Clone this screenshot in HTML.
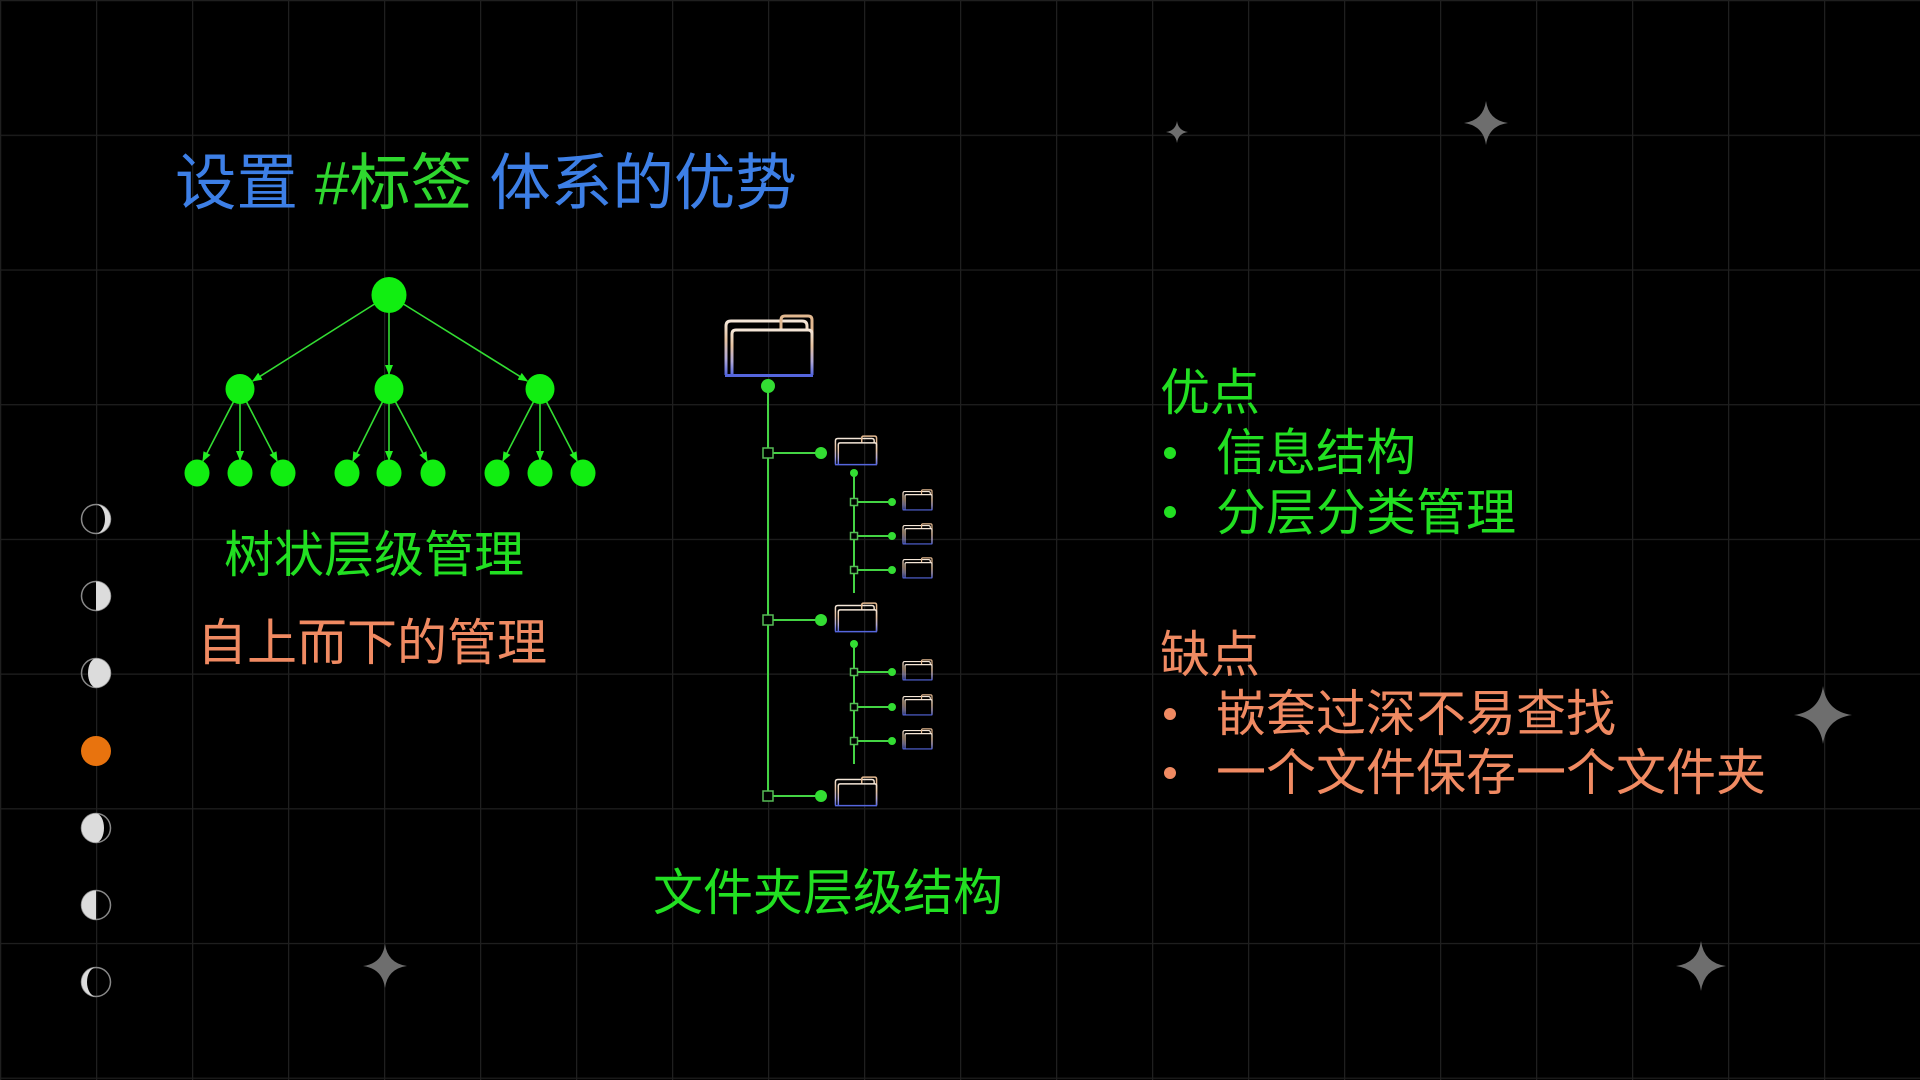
<!DOCTYPE html>
<html><head><meta charset="utf-8"><style>
html,body{margin:0;padding:0;background:#000;width:1920px;height:1080px;overflow:hidden}
svg{display:block}
text{font-family:"Liberation Sans","Noto Sans CJK SC",sans-serif;dominant-baseline:central}
</style></head><body>
<svg width="1920" height="1080" viewBox="0 0 1920 1080" xmlns="http://www.w3.org/2000/svg">
<defs>
<pattern id="grid" x="0" y="0" width="96" height="134.7" patternUnits="userSpaceOnUse">
<path d="M0,0 V134.7 M0,0 H96" stroke="#1f1f1f" stroke-width="2.5" fill="none"/>
</pattern>
<marker id="ar" markerWidth="10" markerHeight="10" refX="9" refY="5" orient="auto" markerUnits="userSpaceOnUse">
<path d="M0,1 L10,5 L0,9 Z" fill="#22ee22"/>
</marker>
<linearGradient id="fg" x1="0" y1="0" x2="0" y2="1">
<stop offset="0" stop-color="#f4e6d8"/><stop offset="0.35" stop-color="#e6c2a0"/><stop offset="0.7" stop-color="#b0a8d8"/><stop offset="1" stop-color="#5566dd"/>
</linearGradient>
<symbol id="folder" viewBox="0 0 92 64">
<path d="M3,61 V12 Q3,7 8,7 H79 Q84,7 84,12 V16" fill="none" stroke="url(#fg)" vector-effect="non-scaling-stroke"/>
<path d="M58,15 V6 Q58,2 62,2 H85 Q89,2 89,6 V61" fill="none" stroke="#e2b890" vector-effect="non-scaling-stroke"/>
<path d="M9,61 V20 Q9,16 13,16 H85 Q89,16 89,20 V61" fill="none" stroke="url(#fg)" vector-effect="non-scaling-stroke"/>
<path d="M2,61.5 H90" stroke="#5566dd" vector-effect="non-scaling-stroke"/>
</symbol>
<symbol id="star" viewBox="-1 -1 2 2">
<path d="M0,-1 Q0.12,-0.12 1,0 Q0.12,0.12 0,1 Q-0.12,0.12 -1,0 Q-0.12,-0.12 0,-1 Z" fill="#6e6e6e"/>
</symbol>
</defs>
<rect width="1920" height="1080" fill="#000"/>
<rect width="1920" height="1080" fill="url(#grid)"/>

<use href="#star" x="1166" y="121" width="22" height="22"/>
<use href="#star" x="1463" y="101" width="46" height="44"/>
<use href="#star" x="1793" y="686" width="60" height="58"/>
<use href="#star" x="362" y="944" width="46" height="44"/>
<use href="#star" x="1675" y="941" width="52" height="50"/>

<text x="175" y="183" font-size="61.5"><tspan fill="#3d7fe6">设置 </tspan><tspan fill="#2fd72f">#标签 </tspan><tspan fill="#3d7fe6">体系的优势</tspan></text>

<g stroke="#33dd33" stroke-width="1.6" fill="none" marker-end="url(#ar)">
<line x1="374.6" y1="304" x2="252.7" y2="381"/>
<line x1="389" y1="312" x2="389" y2="374"/>
<line x1="403.4" y1="304" x2="527.3" y2="381"/>
<line x1="233.4" y1="402" x2="202.9" y2="461"/>
<line x1="240" y1="403.5" x2="240" y2="460"/>
<line x1="246.6" y1="402" x2="277.1" y2="461"/>
<line x1="382.4" y1="402" x2="352.9" y2="461"/>
<line x1="389" y1="403.5" x2="389" y2="460"/>
<line x1="395.6" y1="402" x2="427.1" y2="461"/>
<line x1="533.4" y1="402" x2="502.9" y2="461"/>
<line x1="540" y1="403.5" x2="540" y2="460"/>
<line x1="546.6" y1="402" x2="577.1" y2="461"/>
</g>
<g fill="#11ee11">
<ellipse cx="389" cy="295" rx="17.5" ry="18"/>
<ellipse cx="240" cy="389" rx="14.5" ry="15"/>
<ellipse cx="389" cy="389" rx="14.5" ry="15"/>
<ellipse cx="540" cy="389" rx="14.5" ry="15"/>
<ellipse cx="197" cy="473" rx="12.5" ry="13.5"/>
<ellipse cx="240" cy="473" rx="12.5" ry="13.5"/>
<ellipse cx="283" cy="473" rx="12.5" ry="13.5"/>
<ellipse cx="347" cy="473" rx="12.5" ry="13.5"/>
<ellipse cx="389" cy="473" rx="12.5" ry="13.5"/>
<ellipse cx="433" cy="473" rx="12.5" ry="13.5"/>
<ellipse cx="497" cy="473" rx="12.5" ry="13.5"/>
<ellipse cx="540" cy="473" rx="12.5" ry="13.5"/>
<ellipse cx="583" cy="473" rx="12.5" ry="13.5"/>
</g>
<text x="374" y="555" font-size="50" fill="#22e022" text-anchor="middle">树状层级管理</text>
<text x="372" y="643" font-size="50" fill="#f08a62" text-anchor="middle">自上而下的管理</text>

<g stroke="#888" stroke-width="1.5" fill="none">
<circle cx="96" cy="519" r="14.5"/><circle cx="96" cy="596" r="14.5"/><circle cx="96" cy="673" r="14.5"/>
<circle cx="96" cy="828" r="14.5"/><circle cx="96" cy="905" r="14.5"/><circle cx="96" cy="982" r="14.5"/>
</g>
<g fill="#dcdcdc">
<path d="M96,504.5 A14.5,14.5 0 0 1 96,533.5 A9,14.5 0 0 0 96,504.5 Z"/>
<path d="M96,581.5 A14.5,14.5 0 0 1 96,610.5 Z"/>
<path d="M96,658.5 A14.5,14.5 0 0 1 96,687.5 A8,14.5 0 0 1 96,658.5 Z"/>
<path d="M96,813.5 A14.5,14.5 0 0 0 96,842.5 A8,14.5 0 0 0 96,813.5 Z"/>
<path d="M96,890.5 A14.5,14.5 0 0 0 96,919.5 Z"/>
<path d="M96,967.5 A14.5,14.5 0 0 0 96,996.5 A9,14.5 0 0 1 96,967.5 Z"/>
</g>
<circle cx="96" cy="751" r="15" fill="#e8730e"/>

<use href="#folder" x="723" y="314" width="92" height="64" stroke-width="3"/>
<g stroke="#44d444" stroke-width="2" fill="none">
<line x1="768" y1="386" x2="768" y2="796"/>
<line x1="768" y1="453" x2="821" y2="453"/>
<line x1="768" y1="620" x2="821" y2="620"/>
<line x1="768" y1="796" x2="821" y2="796"/>
<line x1="854" y1="473" x2="854" y2="593"/>
<line x1="854" y1="644" x2="854" y2="764"/>
<line x1="854" y1="502" x2="892" y2="502"/>
<line x1="854" y1="536" x2="892" y2="536"/>
<line x1="854" y1="570" x2="892" y2="570"/>
<line x1="854" y1="672" x2="892" y2="672"/>
<line x1="854" y1="707" x2="892" y2="707"/>
<line x1="854" y1="741" x2="892" y2="741"/>
</g>
<g fill="#000" stroke="#55bb55" stroke-width="1.5">
<rect x="763" y="448" width="10" height="10"/><rect x="763" y="615" width="10" height="10"/><rect x="763" y="791" width="10" height="10"/>
<rect x="850.5" y="498.5" width="7" height="7"/><rect x="850.5" y="532.5" width="7" height="7"/><rect x="850.5" y="566.5" width="7" height="7"/>
<rect x="850.5" y="668.5" width="7" height="7"/><rect x="850.5" y="703.5" width="7" height="7"/><rect x="850.5" y="737.5" width="7" height="7"/>
</g>
<g fill="#33dd33">
<circle cx="768" cy="386" r="7"/>
<circle cx="821" cy="453" r="6"/><circle cx="821" cy="620" r="6"/><circle cx="821" cy="796" r="6"/>
<circle cx="854" cy="473" r="4"/><circle cx="854" cy="644" r="4"/>
<circle cx="892" cy="502" r="4"/><circle cx="892" cy="536" r="4"/><circle cx="892" cy="570" r="4"/>
<circle cx="892" cy="672" r="4"/><circle cx="892" cy="707" r="4"/><circle cx="892" cy="741" r="4"/>
</g>
<g stroke-width="1.5">
<use href="#folder" x="834" y="435" width="44" height="31"/>
<use href="#folder" x="834" y="602" width="44" height="31"/>
<use href="#folder" x="834" y="776" width="44" height="31"/>
</g>
<g stroke-width="1.2">
<use href="#folder" x="902" y="489" width="31" height="22"/>
<use href="#folder" x="902" y="523" width="31" height="22"/>
<use href="#folder" x="902" y="557" width="31" height="22"/>
<use href="#folder" x="902" y="659" width="31" height="22"/>
<use href="#folder" x="902" y="694" width="31" height="22"/>
<use href="#folder" x="902" y="728" width="31" height="22"/>
</g>

<text x="828" y="893" font-size="50" fill="#22e022" text-anchor="middle">文件夹层级结构</text>

<text x="1160" y="393" font-size="50" fill="#22e022">优点</text>
<circle cx="1170" cy="453" r="6" fill="#22e022"/>
<text x="1216" y="453" font-size="50" fill="#22e022">信息结构</text>
<circle cx="1170" cy="512" r="6" fill="#22e022"/>
<text x="1216" y="513" font-size="50" fill="#22e022">分层分类管理</text>
<text x="1160" y="655" font-size="50" fill="#f08a62">缺点</text>
<circle cx="1170" cy="714" r="6" fill="#f08a62"/>
<text x="1216" y="714" font-size="50" fill="#f08a62">嵌套过深不易查找</text>
<circle cx="1170" cy="773" r="6" fill="#f08a62"/>
<text x="1216" y="773" font-size="50" fill="#f08a62">一个文件保存一个文件夹</text>
</svg>
</body></html>
